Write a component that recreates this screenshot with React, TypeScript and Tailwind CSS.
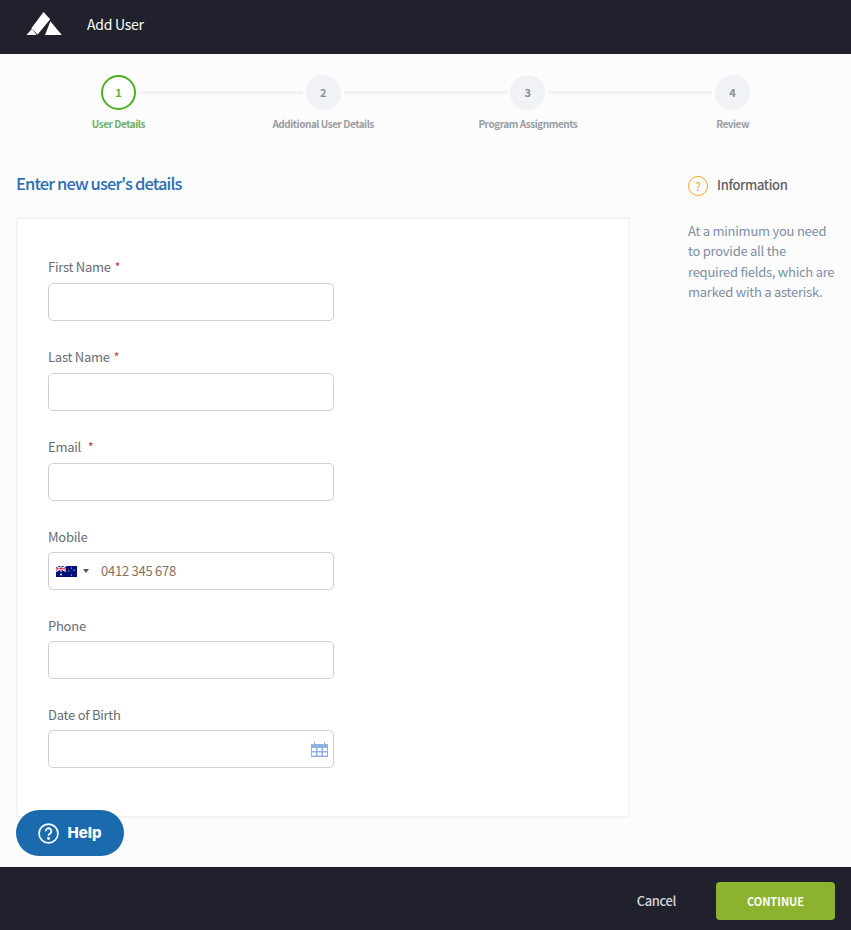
const font = { fontFamily: '"Noto Sans CJK SC", "Noto Sans", sans-serif' };

const steps = [
  { n: "1", label: "User Details" },
  { n: "2", label: "Additional User Details" },
  { n: "3", label: "Program Assignments" },
  { n: "4", label: "Review" },
];

function Logo() {
  return (
    <svg width="36" height="24" viewBox="26 12 36 24" fill="#fff" className="block">
      <polygon points="43.5,12 50.2,19.3 37.6,34.4 31.4,28.3" />
      <polygon points="26.5,35 32,28.8 36.6,35" />
      <polygon points="50.4,21.2 61.8,35 45,35 " />
    </svg>
  );
}

function Flag() {
  return (
    <svg width="21" height="11" viewBox="0 0 21 11" className="block">
      <rect width="21" height="11" fill="#00107a" />
      <path d="M0 0L10 5.5M10 0L0 5.5" stroke="#fff" strokeWidth="1.2" />
      <path d="M5 0V5.5M0 2.75H10" stroke="#fff" strokeWidth="2" />
      <path d="M5 0V5.5M0 2.75H10" stroke="#e0243a" strokeWidth="1" />
      <circle cx="5" cy="8.5" r=".9" fill="#fff" />
      <circle cx="15.5" cy="2" r=".6" fill="#fff" />
      <circle cx="15.5" cy="9" r=".6" fill="#fff" />
      <circle cx="12.8" cy="4.8" r=".6" fill="#fff" />
      <circle cx="18.2" cy="4.2" r=".6" fill="#fff" />
    </svg>
  );
}

function Calendar() {
  return (
    <svg width="17" height="15" viewBox="0 0 17 15" className="block" fill="#8fb2de">
      <path d="M0 2H3V0H4V2H13V0H14V2H17V15H0Z" />
      <g fill="#fff">
        <rect x="1" y="6" width="4" height="3" />
        <rect x="6.5" y="6" width="4" height="3" />
        <rect x="12" y="6" width="4" height="3" />
        <rect x="1" y="10.5" width="4" height="3" />
        <rect x="6.5" y="10.5" width="4" height="3" />
        <rect x="12" y="10.5" width="4" height="3" />
      </g>
    </svg>
  );
}

function Field({
  label,
  required,
  gap,
  className,
  inputGap = "mt-[6px]",
  children,
}: {
  label: string;
  required?: boolean;
  gap?: string;
  className?: string;
  inputGap?: string;
  children?: React.ReactNode;
}) {
  return (
    <div className={className}>
      <div className="flex h-[20px] items-center text-[13px] leading-[20px] tracking-[-0.25px] text-[#666c75]">
        <span>{label}</span>
        {required && <span className={`${gap} text-[12px] text-[#c0392b]`}>*</span>}
      </div>
      <div className={`${inputGap} flex h-[38px] w-[286px] items-center rounded-[5px] border border-[#cfcfcf] bg-white`}>
        {children}
      </div>
    </div>
  );
}

export default function App() {
  return (
    <div className="relative flex h-[930px] w-[851px] flex-col overflow-hidden bg-[#fcfcfc]" style={font}>
      <header className="flex h-[54px] shrink-0 items-center bg-[#20212c] pb-[6px] pl-[26px]">
        <Logo />
        <span className="ml-[25px] mt-[1px] text-[14px] tracking-[-0.25px] text-white">Add User</span>
      </header>

      <div className="shrink-0 pt-[21px]">
        <div className="flex items-center px-[101px]">
          {steps.map((s, i) => (
            <div key={s.n} className={i === 3 ? "flex items-center" : "flex flex-1 items-center"}>
              <div
                className={
                  i === 0
                    ? "flex h-[35px] w-[35px] shrink-0 items-center justify-center rounded-full border-2 border-[#4cb01f] bg-white pb-[1px] text-[11px] font-bold text-[#5cb030]"
                    : "flex h-[35px] w-[35px] shrink-0 items-center justify-center rounded-full bg-[#f0f2f5] pb-[1px] text-[11px] font-bold text-[#8a8f96]"
                }
              >
                {s.n}
              </div>
              {i < 3 && <div className="mx-[3px] h-[3px] flex-1 bg-[#f0f2f5]" />}
            </div>
          ))}
        </div>
        <div className="mt-[6px] grid grid-cols-4 px-4">
          {steps.map((s, i) => (
            <div
              key={s.n}
              className={
                i === 0
                  ? "text-center text-[10px] font-bold leading-[16px] tracking-[-0.47px] text-[#6fae6a]"
                  : "text-center text-[10px] font-bold leading-[16px] tracking-[-0.47px] text-[#9a9da3]"
              }
            >
              {s.label}
            </div>
          ))}
        </div>
      </div>

      <main className="flex flex-1 pl-4 pt-[38px]">
        <div className="w-[614px] shrink-0">
          <h1 className="text-[16.5px] font-medium leading-[26px] tracking-[-0.87px] text-[#2e6db4]">
            Enter new user's details
          </h1>
          <div className="mt-[21px] h-[601px] rounded-[2px] border-2 border-[#f4f4f4] bg-white pl-[30px] pt-[38px]">
            <Field label="First Name" required gap="ml-[4px]" />
            <Field label="Last Name" required gap="ml-[4px]" className="mt-[26px]" />
            <Field label="Email" required gap="ml-[7px]" className="mt-[26px]" />
            <Field label="Mobile" className="mt-[26px]" inputGap="mt-[5px]">
              <div className="ml-[7px] flex items-center">
                <Flag />
                <span className="ml-[6px] h-0 w-0 border-x-[3px] border-t-[4px] border-x-transparent border-t-[#555]" />
              </div>
              <span className="ml-[12px] text-[13px] tracking-[-0.25px] text-[#8a6f5f]">0412 345 678</span>
            </Field>
            <Field label="Phone" className="mt-[26px]" inputGap="mt-[5px]" />
            <Field label="Date of Birth" className="mt-[26px]" inputGap="mt-[5px]">
              <div className="ml-auto mr-[5px]">
                <Calendar />
              </div>
            </Field>
          </div>
        </div>

        <aside className="ml-[58px] w-[163px] pt-[5px]">
          <div className="flex items-center">
            <span className="flex h-[20px] w-[20px] items-center justify-center rounded-full border border-[#f5a623] text-[12px] leading-none text-[#f5a623]">
              ?
            </span>
            <span className="mb-[3px] ml-[9px] text-[13px] font-medium tracking-[-0.35px] text-[#5f6066]">
              Information
            </span>
          </div>
          <p className="mt-[23px] text-[13px] leading-[20.5px] tracking-[-0.25px] text-[#7d8fa3]">
            At a minimum you need
            <br />
            to provide all the
            <br />
            required fields, which are
            <br />
            marked with a asterisk.
          </p>
        </aside>
      </main>

      <footer className="flex h-[63px] shrink-0 items-center justify-end bg-[#20212c] pr-[16px] pt-[4px]">
        <span className="mr-[40px] text-[13px] font-medium tracking-[-0.4px] text-[#d4d6da]">Cancel</span>
        <button className="h-[38px] w-[119px] rounded-[4px] bg-[#8cb32f] pt-[1px] text-[11px] font-bold text-white">
          CONTINUE
        </button>
      </footer>

      <div className="absolute left-[16px] top-[810px] flex h-[46px] w-[108px] items-center justify-center gap-[8px] rounded-full bg-[#1b6aad] text-white">
        <svg width="21" height="21" viewBox="0 0 20 20" fill="none" stroke="#fff" strokeWidth="1.6">
          <circle cx="10" cy="10" r="9" />
          <path d="M7.3 7.8a2.7 2.7 0 1 1 4.2 2.2c-1 .7-1.5 1.1-1.5 2.2" strokeWidth="1.8" />
          <circle cx="10" cy="14.8" r=".6" fill="#fff" />
        </svg>
        <span className="text-[15px] font-extrabold" style={{ fontFamily: '"Inter", sans-serif' }}>
          Help
        </span>
      </div>
    </div>
  );
}
